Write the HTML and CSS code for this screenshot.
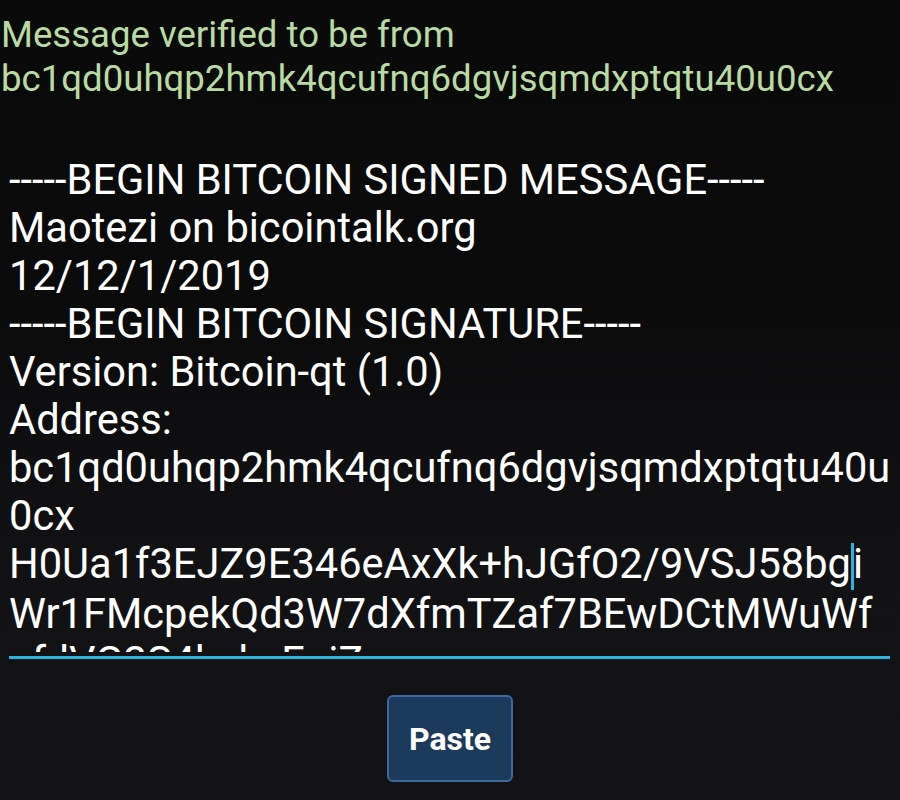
FILE: index.html
```html
<!DOCTYPE html>
<html lang="en">
<head>
    <meta charset="UTF-8">
    <meta name="viewport" content="width=device-width, initial-scale=1.0">
    <title>Verify Message</title>
    <link rel="stylesheet" href="styles.css">
</head>
<body>
    <!-- Verification result -->
    <div class="status">
        <div>Message verified to be from</div>
        <div>bc1qd0uhqp2hmk4qcufnq6dgvjsqmdxptqtu40u0cx</div>
    </div>

    <!-- Signed message editor -->
    <div class="editor">
        <div class="editor-text">
            <div>-----BEGIN BITCOIN SIGNED MESSAGE-----</div>
            <div>Maotezi on bicointalk.org</div>
            <div>12/12/1/2019</div>
            <div>-----BEGIN BITCOIN SIGNATURE-----</div>
            <div>Version: Bitcoin-qt (1.0)</div>
            <div>Address:</div>
            <div>bc1qd0uhqp2hmk4qcufnq6dgvjsqmdxptqtu40u</div>
            <div>0cx</div>
            <div>H0Ua1f3EJZ9E346eAxXk+hJGfO2/9VSJ58bg<span class="cursor"></span>i</div>
            <div>Wr1FMcpekQd3W7dXfmTZaf7BEwDCtMWuWf</div>
            <div>afdVG2S4hzkeEqiZ=</div>
            <div>-----END BITCOIN SIGNATURE-----</div>
        </div>
    </div>

    <!-- Actions -->
    <div class="actions">
        <button type="button" class="paste-btn">Paste</button>
    </div>
</body>
</html>
```

FILE: styles.css
```css
/* General Reset */
* {
    margin: 0;
    padding: 0;
    box-sizing: border-box;
    font-family: Roboto, "Liberation Sans", sans-serif;
}

html, body {
    height: 100%;
}

body {
    background: linear-gradient(to bottom, #0a0a0a 0%, #0b0b0c 40%, #121215 70%, #131317 100%);
    color: #ffffff;
}

/* Verification result */
.status {
    padding: 13px 0 0 1px;
    font-size: 36.6px;
    line-height: 44px;
    color: #b9dba3;
    height: 156px;
}

/* Editor */
.editor {
    margin: 0 10px 0 9px;
    padding-bottom: 4px;
    border-bottom: 3px solid #29b3df;
}

.editor-text {
    height: 496px;
    overflow: hidden;
    font-size: 41.6px;
    line-height: 48px;
    white-space: nowrap;
}

.cursor {
    display: inline-block;
    width: 3px;
    height: 47px;
    margin-right: -1px;
    vertical-align: -12px;
    background-color: #29b3df;
}

/* Actions */
.actions {
    display: flex;
    justify-content: center;
    padding-top: 36px;
}

.paste-btn {
    width: 126px;
    height: 87px;
    background-color: #1c3a5b;
    border: 2px solid #3c6a9c;
    border-radius: 6px;
    color: #ffffff;
    font-size: 32px;
    font-weight: bold;
    cursor: pointer;
}
```
